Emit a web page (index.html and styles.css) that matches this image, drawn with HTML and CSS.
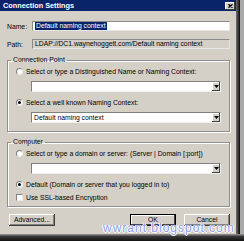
FILE: index.html
```html
<!DOCTYPE html>
<html>
<head>
<meta charset="utf-8">
<link rel="stylesheet" href="styles.css">
</head>
<body>
<div class="screen">
  <div class="top">
    <div class="window">
      <div class="titlebar">
        <span class="title">Connection Settings</span>
        <span class="close"><svg width="5" height="4" viewBox="0 0 5 4"><path d="M0.5 0.2 L4.5 3.8 M4.5 0.2 L0.5 3.8" stroke="#000" stroke-width="1.2"/></svg></span>
      </div>
      <div class="content">
        <div class="row">
          <span class="label">Name:</span>
          <div class="field"><span class="sel">Default naming context</span></div>
        </div>
        <div class="row path-row">
          <span class="label">Path:</span>
          <div class="field readonly">LDAP://DC1.waynehoggett.com/Default naming context</div>
        </div>
        <fieldset class="group group-one">
          <legend>Connection Point</legend>
          <div class="option"><span class="radio"></span>Select or type a Distinguished Name or Naming Context:</div>
          <div class="combo"><span class="combo-text"></span><span class="combo-btn"><svg width="5" height="3" viewBox="0 0 5 3"><path d="M0 0 H5 L2.5 3 Z" fill="#000"/></svg></span></div>
          <div class="option"><span class="radio checked"></span>Select a well known Naming Context:</div>
          <div class="combo"><span class="combo-text">Default naming context</span><span class="combo-btn"><svg width="5" height="3" viewBox="0 0 5 3"><path d="M0 0 H5 L2.5 3 Z" fill="#000"/></svg></span></div>
        </fieldset>
        <fieldset class="group group-two">
          <legend>Computer</legend>
          <div class="option"><span class="radio"></span>Select or type a domain or server: (Server | Domain [:port])</div>
          <div class="combo"><span class="combo-text"></span><span class="combo-btn"><svg width="5" height="3" viewBox="0 0 5 3"><path d="M0 0 H5 L2.5 3 Z" fill="#000"/></svg></span></div>
          <div class="option"><span class="radio checked"></span>Default (Domain or server that you logged in to)</div>
          <div class="option check-row"><span class="check"></span>Use SSL-based Encryption</div>
        </fieldset>
        <div class="buttons">
          <button class="btn">Advanced...</button>
          <span class="spacer"></span>
          <button class="btn default">OK</button>
          <button class="btn">Cancel</button>
        </div>
      </div>
    </div>
    <div class="edge-right"></div>
  </div>
  <div class="edge-bottom"></div>
  <div class="watermark">wwrant.blogspot.com</div>
</div>
</body>
</html>
```
FILE: styles.css
```css
html, body {
  margin: 0;
  padding: 0;
  background: #a9a9a9;
}

.screen {
  position: relative;
  width: 244px;
  height: 241px;
  overflow: hidden;
  display: flex;
  flex-direction: column;
  font-family: "Liberation Sans", Arial, sans-serif;
  font-size: 6.8px;
  color: #000;
  background: #a9a9a9;
}

.top {
  display: flex;
  height: 234px;
}

.window {
  width: 236px;
  background: #d4d0c8;
  display: flex;
  flex-direction: column;
}

.edge-right {
  width: 4px;
  background: linear-gradient(to right, #707070, #2a2a2a 70%, #050505);
}

.edge-bottom {
  height: 7px;
  background: linear-gradient(#858585 0, #858585 1px, #3a3a3a 2px, #121212);
}

.titlebar {
  height: 11px;
  background: #0a246a;
  display: flex;
  align-items: center;
  justify-content: space-between;
  padding: 0 1px 0 3px;
}

.title {
  color: #fff;
  font-weight: bold;
  font-size: 7.3px;
  line-height: 11px;
}

.close {
  width: 10px;
  height: 8px;
  box-sizing: border-box;
  background: #d4d0c8;
  box-shadow: inset -1px -1px 0 #404040, inset 1px 1px 0 #fff;
  display: flex;
  align-items: center;
  justify-content: center;
}

.content {
  padding: 10px 6px 0 7px;
  display: flex;
  flex-direction: column;
}

.row {
  display: flex;
  align-items: center;
  height: 10px;
}

.path-row {
  margin-top: 8px;
}

.label {
  width: 25px;
  flex: none;
}

.field {
  flex: 1;
  height: 10px;
  box-sizing: border-box;
  border: 1px solid;
  border-color: #8a8a8a #e6e6e6 #e6e6e6 #8a8a8a;
  background: #fff;
  display: flex;
  align-items: center;
  padding-left: 2px;
  white-space: nowrap;
  overflow: hidden;
  line-height: 8px;
}

.field.readonly {
  background: #d4d0c8;
  padding-left: 2px;
}

.sel {
  background: #0a246a;
  color: #fff;
  padding: 0 1px;
  line-height: 8px;
}

.group {
  margin: 0;
  min-width: 0;
  border: 1px solid #8f8f8f;
  box-shadow: 1px 1px 0 #fff, inset 1px 1px 0 #fff;
}

.group-one {
  margin-top: 7px;
  padding: 3px 0 2px 0;
}

.group-two {
  margin-top: 6px;
  padding: 3px 0 5px 0;
}

.group legend {
  padding: 0 2px;
  margin-left: 3px;
  line-height: 8px;
  font-size: 6.8px;
}

.option {
  display: flex;
  align-items: center;
  height: 8px;
  margin-left: 8px;
  white-space: nowrap;
}

.check-row {
  margin-top: 5px;
}

.radio {
  width: 7px;
  height: 7px;
  box-sizing: border-box;
  border-radius: 50%;
  background: #fff;
  border: 1px solid;
  border-color: #808080 #e8e8e8 #e8e8e8 #808080;
  margin-right: 3px;
  flex: none;
  display: flex;
  align-items: center;
  justify-content: center;
}

.radio.checked::after {
  content: "";
  width: 3px;
  height: 3px;
  border-radius: 50%;
  background: #000;
}

.check {
  width: 7px;
  height: 7px;
  box-sizing: border-box;
  background: #fff;
  border: 1px solid;
  border-color: #808080 #e8e8e8 #e8e8e8 #808080;
  margin-right: 3px;
  flex: none;
}

.combo {
  margin: 6px 0 6px 23px;
  width: 190px;
  height: 11px;
  box-sizing: border-box;
  border: 1px solid;
  border-color: #808080 #f0f0f0 #f0f0f0 #808080;
  background: #fff;
  display: flex;
}

.combo-text {
  flex: 1;
  padding-left: 2px;
  line-height: 9px;
  white-space: nowrap;
}

.combo-btn {
  width: 8px;
  height: 9px;
  box-sizing: border-box;
  background: #d4d0c8;
  box-shadow: inset -1px -1px 0 #404040, inset 1px 1px 0 #fff;
  display: flex;
  align-items: center;
  justify-content: center;
}

.buttons {
  display: flex;
  margin-top: 7px;
  padding-left: 2px;
}

.spacer {
  flex: 1;
}

.btn {
  width: 46px;
  height: 12px;
  padding: 0;
  border: none;
  background: #d4d0c8;
  font-family: "Liberation Sans", Arial, sans-serif;
  font-size: 6.8px;
  color: #000;
  line-height: 12px;
  box-shadow: inset -1px -1px 0 #404040, inset 1px 1px 0 #fff, inset -2px -2px 0 #808080;
}

.btn.default {
  margin-right: 8px;
  box-shadow: inset 0 0 0 1px #000, inset -2px -2px 0 #404040, inset 2px 2px 0 #fff;
}

.watermark {
  position: absolute;
  left: 103px;
  top: 221px;
  font-family: "Liberation Sans", Arial, sans-serif;
  font-size: 12px;
  letter-spacing: 1px;
  color: #8f9edc;
  text-shadow: 0 0 1px #fff, 1px 0 0 #fff, -1px 0 0 #fff, 0 1px 0 #fff;
  white-space: nowrap;
}
```
